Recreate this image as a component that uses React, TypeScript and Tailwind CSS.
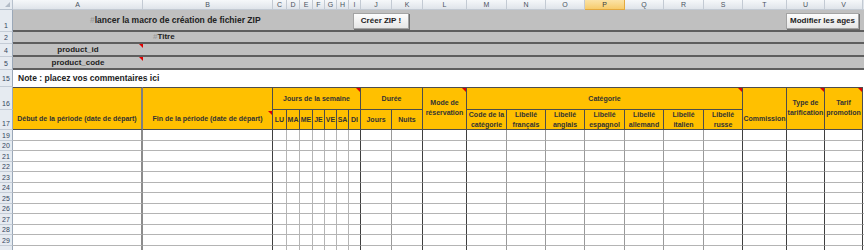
import React from "react";

const letters = [
  "A", "B", "C", "D", "E", "F", "G", "H", "I", "J", "K",
  "L", "M", "N", "O", "P", "Q", "R", "S", "T", "U", "V",
];

// right border of each data column, A..V
const dark = "border-r border-r-[#3f3f3f]";
const light = "border-r border-r-[#b5b5b5]";
const mid = "border-r border-r-[#9a9a9a]";
const colBorders = [
  "border-r-2 border-r-[#8c8c8c]",
  dark,
  light, light, light, light, light, light,
  dark,
  mid,
  dark,
  dark,
  mid, mid, mid, mid, mid, mid,
  dark,
  dark,
  dark,
  dark,
];

const dataRows = [19, 20, 21, 22, 23, 24, 25, 26, 27, 28, 29, 0];

function Flag({ top }: { top?: boolean }) {
  return (
    <span
      className={
        "absolute right-0 border-t-[4px] border-l-[4px] border-t-[#e00000] border-l-transparent " +
        (top ? "top-[23px]" : "top-0")
      }
    />
  );
}

function RowHead({ n, center }: { n: number; center?: boolean }) {
  return (
    <div
      className={
        "flex justify-center bg-[#e6ebf1] border-r border-b border-r-[#9ba8b8] border-b-[#c4ccd6] text-[7px] leading-none text-[#34465c] " +
        (center ? "items-center" : "items-end pb-[2px]")
      }
    >
      {n > 0 ? n : ""}
    </div>
  );
}

export default function App() {
  const yellow =
    "relative bg-[#ffc000] text-[#333] font-bold text-[7px] leading-[10px] text-center border-b border-r border-[#4d4d4d]";

  return (
    <div className="relative w-[864px] h-[250px] overflow-hidden bg-white text-[#222] font-['Liberation_Sans_Narrow','Arial_Narrow','Liberation_Sans',sans-serif]">
      <div className="grid grid-cols-[13px_130px_130px_14px_13px_13px_12px_12px_12px_12px_31px_31px_44px_40px_39px_39px_40px_39px_40px_39px_44px_38px_38px_1fr] grid-rows-[10px_22px_12px_13px_13px_17px_23px_20px_repeat(6,11px_10px)]">

        {/* COLUMN LETTERS */}
        <div className="relative bg-[#e6ebf1] border-r border-b border-[#b7c1cd]">
          <span className="absolute right-[2px] bottom-[2px] border-b-[5px] border-l-[5px] border-b-[#b3bcc7] border-l-transparent" />
        </div>
        {letters.map((l) => (
          <div
            key={l}
            className={
              "flex items-center justify-center border-r border-b text-[7px] leading-none " +
              (l === "P"
                ? "bg-linear-to-b from-[#fbe3a6] to-[#f6cb6a] border-[#e3a93f] text-[#3b3b3b]"
                : "bg-linear-to-b from-[#f6f8fa] to-[#dfe4ea] border-[#c3cad3] text-[#4a5260]")
            }
          >
            {l}
          </div>
        ))}
        <div className="bg-[#dfe4ea] border-b border-[#c3cad3]" />

        {/* ROW 1 */}
        <RowHead n={1} />
        <div className="col-span-23 flex items-center pl-[77px] bg-[#c0c0c0] border-b-2 border-b-[#5e5e5e] font-bold text-[8.5px]">
          <span className="text-[#9c9c9c]">#</span>lancer la macro de création de fichier ZIP
        </div>

        {/* ROW 2 */}
        <RowHead n={2} center />
        <div className="col-span-23 flex items-center pl-[140px] bg-[#c0c0c0] border-b-2 border-b-[#5e5e5e] font-bold text-[8px]">
          <span className="text-[#9c9c9c]">#</span>Titre
        </div>

        {/* ROW 4 */}
        <RowHead n={4} center />
        <div className="relative flex items-center justify-center bg-[#c0c0c0] border-b-2 border-b-[#5e5e5e] font-bold text-[8px]">
          product_id
          <Flag />
        </div>
        <div className="col-span-22 bg-[#c0c0c0] border-b-2 border-b-[#5e5e5e]" />

        {/* ROW 5 */}
        <RowHead n={5} center />
        <div className="relative flex items-center justify-center bg-[#c0c0c0] border-b-2 border-b-[#5e5e5e] font-bold text-[8px]">
          product_code
          <Flag />
        </div>
        <div className="col-span-22 bg-[#c0c0c0] border-b-2 border-b-[#5e5e5e]" />

        {/* ROW 15 */}
        <RowHead n={15} center />
        <div className="col-span-23 flex items-center pl-[5px] font-bold text-[8.5px]">
          Note : placez vos commentaires ici
        </div>

        {/* ROW 16 */}
        <RowHead n={16} />
        <div className={yellow + " row-span-2 border-t border-r-2 border-r-[#7f7f7f] flex items-end justify-center pb-[5px]"}>
          Début de la période (date de départ)
        </div>
        <div className={yellow + " row-span-2 border-t flex items-end justify-center pb-[5px]"}>
          Fin de la période (date de départ)
          <Flag top />
        </div>
        <div className={yellow + " col-span-7 border-t flex items-center justify-center"}>
          Jours de la semaine
          <Flag />
        </div>
        <div className={yellow + " col-span-2 border-t flex items-center justify-center"}>
          Durée
        </div>
        <div className={yellow + " row-span-2 border-t pt-[10px]"}>
          Mode de
          <br />
          réservation
          <Flag />
        </div>
        <div className={yellow + " col-span-7 border-t flex items-center justify-center"}>
          Catégorie
          <Flag />
        </div>
        <div className={yellow + " row-span-2 border-t flex items-end justify-center pb-[5px]"}>
          Commission
        </div>
        <div className={yellow + " row-span-2 border-t pt-[10px]"}>
          Type de
          <br />
          tarification
          <Flag />
        </div>
        <div className={yellow + " row-span-2 border-t pt-[10px]"}>
          Tarif
          <br />
          promotion
          <Flag />
        </div>
        <div className="row-span-2" />

        {/* ROW 17 */}
        <RowHead n={17} />
        {["LU", "MA", "ME", "JE", "VE", "SA", "DI", "Jours", "Nuits"].map((t) => (
          <div key={t} className={yellow + " flex items-center justify-center"}>
            {t}
          </div>
        ))}
        {[
          ["Code de la", "catégorie"],
          ["Libellé", "français"],
          ["Libellé", "anglais"],
          ["Libellé", "espagnol"],
          ["Libellé", "allemand"],
          ["Libellé", "italien"],
          ["Libellé", "russe"],
        ].map((t) => (
          <div key={t[1]} className={yellow + " flex flex-col items-center justify-center"}>
            <span>{t[0]}</span>
            <span>{t[1]}</span>
          </div>
        ))}

        {/* DATA ROWS */}
        {dataRows.map((n, r) => (
          <React.Fragment key={r}>
            <RowHead n={n} center />
            {colBorders.map((b, i) => (
              <div key={i} className={"bg-white border-b border-b-[#b4b4b4] " + b} />
            ))}
            <div className="bg-white border-b border-b-[#b4b4b4]" />
          </React.Fragment>
        ))}
      </div>

      {/* BUTTONS */}
      <button className="absolute left-[353px] top-[13px] w-[56px] h-[16px] flex items-center justify-center bg-linear-to-b from-[#fdfdfd] to-[#e6e6e6] border border-[#a3a3a3] shadow-[1px_1px_0_#6f6f6f] font-bold text-[8px] text-[#222]">
        Créer ZIP !
      </button>
      <button className="absolute left-[786px] top-[13px] w-[73px] h-[16px] flex items-center justify-center bg-linear-to-b from-[#fdfdfd] to-[#e6e6e6] border border-[#a3a3a3] shadow-[1px_1px_0_#6f6f6f] font-bold text-[8px] text-[#222]">
        Modifier les ages
      </button>
    </div>
  );
}
